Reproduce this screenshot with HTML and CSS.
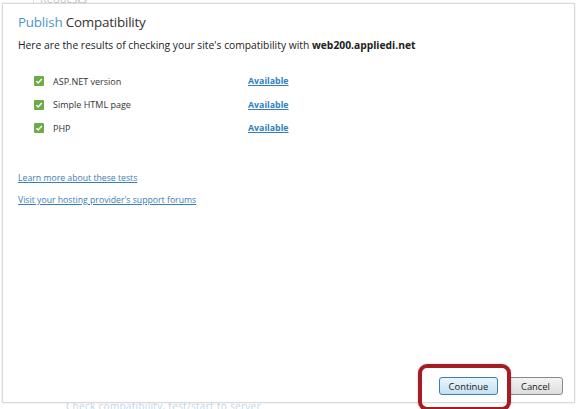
FILE: index.html
```html
<!DOCTYPE html>
<html>
<head>
<meta charset="utf-8">
<link rel="stylesheet" href="styles.css">
</head>
<body>
<div class="backdrop-top">Requests</div>
<div class="dialog">
  <h1 class="title"><span class="accent">Publish</span> Compatibility</h1>
  <p class="intro">Here are the results of checking your site's compatibility with <b>web200.appliedi.net</b></p>
  <ul class="checks">
    <li class="check">
      <span class="box"><svg viewBox="0 0 10 10" width="10" height="10"><path d="M2.3 5.2 L4.2 7 L7.8 3" fill="none" stroke="#fff" stroke-width="1.5"/></svg></span>
      <span class="name">ASP.NET version</span>
      <a class="status" href="#">Available</a>
    </li>
    <li class="check">
      <span class="box"><svg viewBox="0 0 10 10" width="10" height="10"><path d="M2.3 5.2 L4.2 7 L7.8 3" fill="none" stroke="#fff" stroke-width="1.5"/></svg></span>
      <span class="name">Simple HTML page</span>
      <a class="status" href="#">Available</a>
    </li>
    <li class="check">
      <span class="box"><svg viewBox="0 0 10 10" width="10" height="10"><path d="M2.3 5.2 L4.2 7 L7.8 3" fill="none" stroke="#fff" stroke-width="1.5"/></svg></span>
      <span class="name">PHP</span>
      <a class="status" href="#">Available</a>
    </li>
  </ul>
  <div class="links">
    <a href="#">Learn more about these tests</a>
    <a href="#">Visit your hosting provider's support forums</a>
  </div>
  <div class="footer">
    <span class="highlight"><button class="btn primary">Continue</button></span>
    <button class="btn">Cancel</button>
  </div>
</div>
<div class="backdrop-bottom">Check compatibility, test/start to server</div>
</body>
</html>
```
FILE: styles.css
```css
html, body {
  margin: 0;
  padding: 0;
  background: #fff;
  width: 580px;
  height: 409px;
  overflow: hidden;
  font-family: "Open Sans", "Noto Sans", sans-serif;
  position: relative;
}
.backdrop-top {
  position: absolute;
  left: 33px;
  top: -9px;
  font-size: 11px;
  color: #c8c8c8;
  border-left: 1px solid #e2e2e2;
  border-right: 1px solid #e2e2e2;
  padding: 0 6px;
  width: 32px;
  height: 13px;
}
.backdrop-bottom {
  position: absolute;
  left: 66px;
  top: 399px;
  font-size: 10px;
  color: #c4d6e8;
  letter-spacing: 0.3px;
}
.dialog {
  position: relative;
  z-index: 1;
  margin: 3px 0 0 2px;
  width: 573px;
  height: 400px;
  background: #fff;
  border: 1px solid #d9d9d9;
  box-shadow: 0 0 2px rgba(0,0,0,0.12);
  display: flex;
  flex-direction: column;
  box-sizing: border-box;
  padding: 0 0 0 15px;
}
.title {
  margin: 8px 0 0 0;
  font-weight: normal;
  font-size: 13.4px;
  line-height: 20px;
  color: #333;
  letter-spacing: -0.2px;
}
.accent { color: #4a95cf; }
.intro {
  margin: 6px 0 0 0;
  font-size: 10.3px;
  line-height: 14px;
  color: #222;
}
.intro b { font-weight: bold; }
.checks {
  list-style: none;
  margin: 22px 0 0 0;
  padding: 0;
  display: flex;
  flex-direction: column;
  gap: 9.5px;
}
.check {
  display: flex;
  align-items: center;
  height: 14px;
  font-size: 9px;
  color: #333;
}
.box {
  width: 10px;
  height: 10px;
  background: #6cab45;
  border-radius: 1px;
  margin-left: 16px;
  display: flex;
}
.name { margin-left: 9px; width: 195px; }
.status {
  color: #2f7fbf;
  font-weight: bold;
  font-size: 8.8px;
  text-decoration: underline;
}
.links {
  margin-top: 36px;
  display: flex;
  flex-direction: column;
  gap: 8px;
}
.links a {
  font-size: 8.7px;
  line-height: 14px;
  color: #3a7db8;
  text-decoration: underline;
  width: max-content;
}
.footer {
  margin-top: auto;
  margin-bottom: 7px;
  margin-right: 11px;
  display: flex;
  justify-content: flex-end;
  align-items: center;
  gap: 10px;
}
.highlight {
  position: relative;
  display: flex;
}
.highlight::after {
  content: "";
  position: absolute;
  left: -21px;
  right: -13px;
  top: -13px;
  bottom: -16px;
  border: 4px solid #a51d24;
  border-radius: 9px;
  box-shadow: 0 0 2px rgba(0,0,0,0.3);
}
.btn {
  font-family: "Open Sans", "Noto Sans", sans-serif;
  font-size: 9.4px;
  height: 18px;
  padding: 0;
  width: 55px;
  border: 1px solid #8a8a8a;
  border-radius: 3px;
  background: linear-gradient(#f4f4f4, #dddddd);
  color: #222;
}
.btn.primary {
  width: 59px;
  border-color: #3c7fb1;
  background: linear-gradient(#eaf5fc, #c4e1f4);
}
```
